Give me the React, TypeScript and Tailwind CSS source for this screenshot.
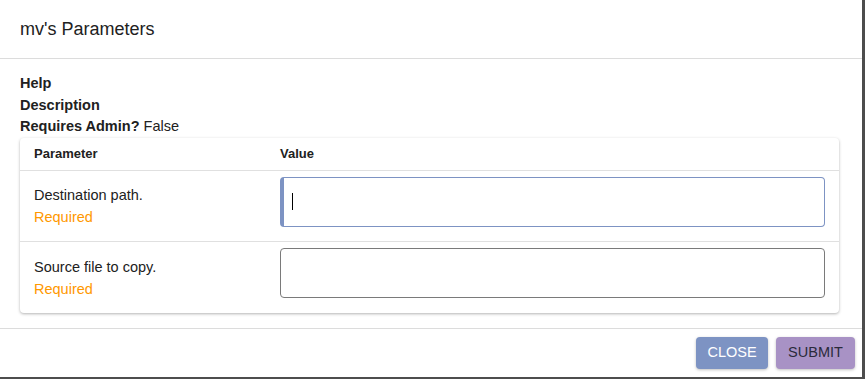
import React from 'react'

interface Param {
  name: string
  focused?: boolean
}

const params: Param[] = [
  { name: 'Destination path.', focused: true },
  { name: 'Source file to copy.' },
]

export default function App() {
  return (
    <div
      className="w-[865px] h-[379px] bg-[#4d4d4d] overflow-hidden"
      style={{ fontFamily: '"Liberation Sans", Arial, sans-serif' }}
    >
      <div className="w-[862px] h-[377px] bg-white flex flex-col text-[#212121]">
        <div className="h-[59px] px-5 flex items-center border-b border-[#dcdcdc] text-[18px]">
          mv's Parameters
        </div>

        <div className="flex-1 pl-5 pr-[23px] pt-[14px] text-[14.5px]">
          <div className="leading-[21.5px] font-bold">Help</div>
          <div className="leading-[21.5px] font-bold">Description</div>
          <div className="leading-[21.5px]">
            <span className="font-bold">Requires Admin?</span> False
          </div>

          <div className="rounded shadow-[0_1px_3px_rgba(0,0,0,0.3)] bg-white">
            <div className="h-[33px] flex items-center border-b border-[#e0e0e0] text-[13px] font-bold">
              <div className="w-[260px] pl-[14px]">Parameter</div>
              <div>Value</div>
            </div>
            {params.map((p, i) => (
              <div
                key={p.name}
                className={`h-[71px] flex ${i < params.length - 1 ? 'border-b border-[#e0e0e0]' : ''}`}
              >
                <div className="w-[260px] pl-[14px] self-center pt-[1px]">
                  <div className="leading-[22px]">{p.name}</div>
                  <div className="leading-[22px] text-[#ff9800]">Required</div>
                </div>
                <div className="flex-1 pr-[14px] pt-[6px]">
                  {p.focused ? (
                    <div className="h-[50px] rounded border border-[#7d93c3] border-l-[4px] flex items-center pl-[8px]">
                      <div className="w-[1px] h-[17px] bg-black" />
                    </div>
                  ) : (
                    <div className="h-[50px] rounded border border-[#7a7a7a]" />
                  )}
                </div>
              </div>
            ))}
          </div>
        </div>

        <div className="h-[49px] border-t border-[#dcdcdc] flex items-start justify-end gap-2 pt-2 pr-[7px]">
          <button className="h-[32px] w-[72px] rounded bg-[#7d93c3] text-white text-[14.5px] shadow-[0_1px_3px_rgba(0,0,0,0.25)]">
            CLOSE
          </button>
          <button className="h-[32px] w-[79px] rounded bg-[#a892c5] text-[#2a2a3a] text-[14.5px] shadow-[0_1px_3px_rgba(0,0,0,0.25)]">
            SUBMIT
          </button>
        </div>
      </div>
    </div>
  )
}
